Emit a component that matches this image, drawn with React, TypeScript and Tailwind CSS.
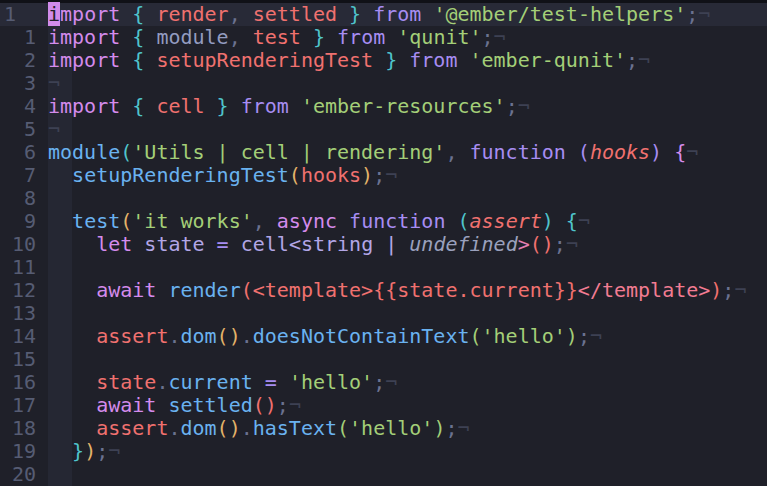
import React from 'react'

type Tok = [string, string, boolean?]

const KW1 = '#d48bec'
const KW2 = '#a78df2'
const RED = '#f0716f'
const BLUE = '#6ab2f0'
const TEAL = '#4fc4cc'
const YEL = '#e3b36a'
const GRN = '#a4cf78'
const PUN = '#6b7290'
const MOD = '#939cc0'
const LAV = '#b2a6e6'
const SP = '#c0c6e0'

const lines: Tok[][] = [
  [['import', KW1], [' '], ['{', TEAL], [' '], ['render', RED], [',', PUN], [' '], ['settled', RED], [' '], ['}', TEAL], [' '], ['from', KW2], [' '], ["'@ember/test-helpers'", GRN], [';', PUN]],
  [['import', KW1], [' '], ['{', TEAL], [' '], ['module', MOD], [',', PUN], [' '], ['test', RED], [' '], ['}', TEAL], [' '], ['from', KW2], [' '], ["'qunit'", GRN], [';', PUN]],
  [['import', KW1], [' '], ['{', TEAL], [' '], ['setupRenderingTest', RED], [' '], ['}', TEAL], [' '], ['from', KW2], [' '], ["'ember-qunit'", GRN], [';', PUN]],
  [],
  [['import', KW1], [' '], ['{', TEAL], [' '], ['cell', RED], [' '], ['}', TEAL], [' '], ['from', KW2], [' '], ["'ember-resources'", GRN], [';', PUN]],
  [],
  [['module', BLUE], ['(', TEAL], ["'Utils | cell | rendering'", GRN], [',', PUN], [' '], ['function', KW2], [' '], ['(', KW2], ['hooks', RED, true], [')', KW2], [' '], ['{', KW1]],
  [['  '], ['setupRenderingTest', BLUE], ['(', YEL], ['hooks', RED], [')', YEL], [';', PUN]],
  [],
  [['  '], ['test', BLUE], ['(', YEL], ["'it works'", GRN], [',', PUN], [' '], ['async', KW1], [' '], ['function', KW2], [' '], ['(', TEAL], ['assert', RED, true], [')', TEAL], [' '], ['{', TEAL]],
  [['    '], ['let', KW1], [' '], ['state', LAV], [' '], ['=', KW2], [' '], ['cell', LAV], ['<', LAV], ['string', LAV], [' '], ['|', LAV], [' '], ['undefined', '#9aa0bd', true], ['>', '#e47fb0'], ['()', RED], [';', PUN]],
  [],
  [['    '], ['await', KW1], [' '], ['render', BLUE], ['(', RED], ['<template>{{state.current}}', RED], ['</template>', '#f27c92'], [')', RED], [';', PUN]],
  [],
  [['    '], ['assert', RED], ['.', PUN], ['dom', BLUE], ['()', YEL], ['.', PUN], ['doesNotContainText', BLUE], ['(', GRN], ["'hello'", GRN], [')', GRN], [';', PUN]],
  [],
  [['    '], ['state', RED], ['.', PUN], ['current', BLUE], [' '], ['=', KW2], [' '], ["'hello'", GRN], [';', PUN]],
  [['    '], ['await', KW1], [' '], ['settled', BLUE], ['()', RED], [';', PUN]],
  [['    '], ['assert', RED], ['.', PUN], ['dom', BLUE], ['()', YEL], ['.', PUN], ['hasText', BLUE], ['(', GRN], ["'hello'", GRN], [')', GRN], [';', PUN]],
  [['  '], ['}', TEAL], [')', YEL], [';', PUN]],
  [],
]

// empty lines that still show the end-of-line marker
const markEmpty = new Set([3, 5])

export default function App() {
  return (
    <div
      className="h-[486px] w-[767px] overflow-hidden bg-[#1f2029] text-[20px] leading-[23px]"
      style={{ fontFamily: '"DejaVu Sans Mono", monospace' }}
    >
      <div className="h-[3px] bg-[#101117]" />
      <div className="relative">
        {/* indent guide column */}
        <div className="absolute bottom-0 left-[48px] top-[23px] w-[24px] bg-[#252733]" />
        {lines.map((toks, i) => {
          const current = i === 0
          const showMark = toks.length > 0 || markEmpty.has(i)
          return (
            <div
              key={i}
              className={`relative flex h-[23px] whitespace-pre ${current ? 'bg-[#282a37]' : ''}`}
            >
              <div
                className={`w-[48px] shrink-0 text-[#565c73] ${current ? 'pl-[4px] text-left text-[#6a7088]' : 'pr-[12px] text-right'}`}
              >
                {current ? '1' : String(i)}
              </div>
              <div className="flex">
                {toks.map(([text, color, italic], j) => {
                  if (current && j === 0) {
                    return (
                      <span key={j} style={{ color }}>
                        <span className="bg-[#d18ceb] text-[#1f2029]">{text[0]}</span>
                        {text.slice(1)}
                      </span>
                    )
                  }
                  return (
                    <span key={j} className={italic ? 'italic' : ''} style={{ color: color ?? SP }}>
                      {text}
                    </span>
                  )
                })}
                {showMark && <span className="text-[#3d4153]">¬</span>}
              </div>
            </div>
          )
        })}
      </div>
    </div>
  )
}
